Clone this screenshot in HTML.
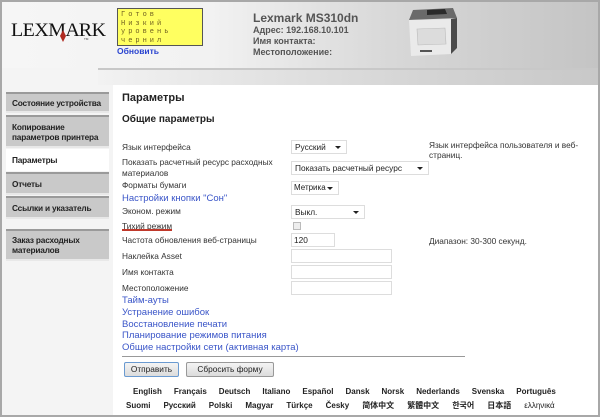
<!DOCTYPE html>
<html><head><meta charset="utf-8"><style>
*{margin:0;padding:0;box-sizing:border-box}
body{width:600px;height:417px;overflow:hidden;font-family:"Liberation Sans","Noto Sans CJK SC",sans-serif;background:#f4f4f4;position:relative;font-size:9px;color:#222}
.a{position:absolute;white-space:nowrap}
.frame{position:absolute;left:0;top:0;width:600px;height:417px;border:2px solid #a8a8a8;pointer-events:none}
.hdr{position:absolute;left:0;top:0;width:600px;height:68px;background:linear-gradient(90deg,#f6f6f6 0%,#f2f2f2 35%,#d8d8d8 65%,#c4c4c4 100%)}
.band{position:absolute;left:98px;top:68px;width:502px;height:17px;border-top:2px solid #c8c8c8;background:linear-gradient(90deg,#f2f2f2,#d6d6d6 60%,#c8c8c8)}
.main{position:absolute;left:113px;top:85px;width:487px;height:332px;background:#fff}
.nav{position:absolute;left:6px;width:103px;background:#c9c9c9;border-top:2px solid #9a9a9a;border-bottom:2px solid #e8e8e8;font-weight:bold;font-size:8.3px;letter-spacing:-0.2px;padding:0 0 0 6px;line-height:10px;display:flex;align-items:center;color:#222;white-space:nowrap}
.nav.on{background:#fff;border-color:#fff}
.lbl{position:absolute;left:122px;font-size:8.3px;color:#333;white-space:nowrap}
.lnk{position:absolute;left:122px;font-size:9.5px;color:#3a55c8;white-space:nowrap}
.sel{position:absolute;left:291px;height:14px;border:1px solid #ddd;background:#fff;font-size:8.3px;padding:1px 3px;color:#222;white-space:nowrap}
.sel:after{content:"";position:absolute;right:5px;top:5px;border:3px solid transparent;border-top:3px solid #222}
.inp{position:absolute;left:291px;height:14px;border:1px solid #ddd;background:#fff;font-size:8.3px;padding:1px 2px}
.btn{position:absolute;top:362px;height:15px;border:1px solid #999;border-radius:2px;background:linear-gradient(#f4f4f4,#dcdcdc);font-size:8.3px;text-align:center;line-height:13px}
.lang{position:absolute;font-weight:bold;font-size:8px;color:#222;white-space:nowrap}
.lang span{display:inline-block}
</style></head><body>
<div class="hdr"></div>
<div class="band"></div>
<div class="main"></div>
<div class="a" style="left:11px;top:20px;font-family:'Liberation Serif',serif;font-size:19px;letter-spacing:-0.5px;color:#111;transform:scaleX(1.05);transform-origin:left">LEXM<span style="letter-spacing:-1px">A</span>RK</div>
<div class="a" style="left:60px;top:30px;width:6px;height:12px;background:#b02a20;clip-path:polygon(50% 0,100% 50%,50% 100%,0 50%)"></div>
<div class="a" style="left:84px;top:37px;font-size:3px;color:#333">TM</div>
<div class="a" style="left:117px;top:8px;width:86px;height:38px;background:#ffff60;border:1px solid #555;font-family:'Liberation Mono',monospace;font-size:7px;line-height:8.6px;color:#706020;padding:2px 3px 0;letter-spacing:3px">Готов<br>Низкий<br>уровень<br>чернил</div>
<div class="a" style="left:117px;top:46px;font-size:8.5px;color:#2a44d0;font-weight:bold">Обновить</div>
<div class="a" style="left:253px;top:11px;font-size:12px;font-weight:bold;color:#555">Lexmark MS310dn</div>
<div class="a" style="left:253px;top:25px;font-size:9px;font-weight:bold;color:#555;line-height:11px">Адрес: 192.168.10.101<br>Имя контакта:<br>Местоположение:</div>
<svg class="a" style="left:405px;top:4px" width="60" height="55" viewBox="0 0 60 55">
<path d="M8 6 L48 4 L52 14 L4 16 Z" fill="#6a6a6a"/>
<path d="M22 6 L40 5 L42 10 L22 11Z" fill="#2a2a2a"/>
<path d="M4 16 L46 15 L46 50 L6 52 Z" fill="#eaeaea"/>
<path d="M46 15 L52 14 L52 44 L46 50Z" fill="#4a4a4a"/>
<path d="M12 25 L40 24 L41 40 L13 41Z" fill="#dcdcdc" stroke="#bbb" stroke-width=".6"/>
<rect x="15" y="46" width="12" height="2" fill="#555"/>
</svg>
<div class="nav" style="top:92px;height:21px">Состояние устройства</div>
<div class="nav" style="top:115px;height:33px">Копирование<br>параметров принтера</div>
<div class="nav on" style="top:149px;height:22px">Параметры</div>
<div class="nav" style="top:172px;height:23px">Отчеты</div>
<div class="nav" style="top:196px;height:23px">Ссылки и указатель</div>
<div class="nav" style="top:229px;height:32px">Заказ расходных<br>материалов</div>
<div class="a" style="left:122px;top:92px;font-size:11px;font-weight:bold;color:#222">Параметры</div>
<div class="a" style="left:122px;top:114px;font-size:10px;font-weight:bold;color:#222">Общие параметры</div>
<div class="lbl" style="top:142px">Язык интерфейса</div>
<div class="lbl" style="top:157px;line-height:11px">Показать расчетный ресурс расходных<br>материалов</div>
<div class="lbl" style="top:180px">Форматы бумаги</div>
<div class="lnk" style="top:193px">Настройки кнопки "Сон"</div>
<div class="lbl" style="top:206px">Эконом. режим</div>
<div class="lbl" style="top:221px">Тихий режим</div>
<div class="a" style="left:122px;top:229px;width:50px;height:2px;background:#c0392b"></div>
<div class="lbl" style="top:235px">Частота обновления веб-страницы</div>
<div class="lbl" style="top:251px">Наклейка Asset</div>
<div class="lbl" style="top:267px">Имя контакта</div>
<div class="lbl" style="top:283px">Местоположение</div>
<div class="lnk" style="top:295px">Тайм-ауты</div>
<div class="lnk" style="top:307px">Устранение ошибок</div>
<div class="lnk" style="top:319px">Восстановление печати</div>
<div class="lnk" style="top:330px">Планирование режимов питания</div>
<div class="lnk" style="top:342px">Общие настройки сети (активная карта)</div>
<div class="sel" style="top:140px;width:56px">Русский</div>
<div class="sel" style="top:161px;width:138px">Показать расчетный ресурс</div>
<div class="sel" style="top:181px;width:48px;font-size:8px;padding:1px 2px">Метрика</div>
<div class="sel" style="top:205px;width:74px">Выкл.</div>
<div class="a" style="left:293px;top:222px;width:8px;height:8px;border:1px solid #bbb;background:#eee"></div>
<div class="inp" style="top:233px;width:44px">120</div>
<div class="inp" style="top:249px;width:101px"></div>
<div class="inp" style="top:265px;width:101px"></div>
<div class="inp" style="top:281px;width:101px"></div>
<div class="a" style="left:429px;top:140px;font-size:8.3px;line-height:10px;color:#333">Язык интерфейса пользователя и веб-<br>страниц.</div>
<div class="a" style="left:429px;top:236px;font-size:8.3px;color:#333">Диапазон: 30-300 секунд.</div>
<div class="a" style="left:122px;top:356px;width:343px;height:1px;background:#999"></div>
<div class="btn" style="left:124px;width:55px;border-color:#6a9ad0">Отправить</div>
<div class="btn" style="left:186px;width:88px">Сбросить форму</div>
<div class="lang" style="left:133px;top:387px"><span style="margin-right:12px">English</span><span style="margin-right:12px">Français</span><span style="margin-right:12px">Deutsch</span><span style="margin-right:12px">Italiano</span><span style="margin-right:12px">Español</span><span style="margin-right:12px">Dansk</span><span style="margin-right:12px">Norsk</span><span style="margin-right:12px">Nederlands</span><span style="margin-right:12px">Svenska</span><span>Português</span></div>
<div class="lang" style="left:126px;top:400px"><span style="margin-right:13px">Suomi</span><span style="margin-right:13px">Русский</span><span style="margin-right:13px">Polski</span><span style="margin-right:13px">Magyar</span><span style="margin-right:13px">Türkçe</span><span style="margin-right:13px">Česky</span><span style="margin-right:13px">简体中文</span><span style="margin-right:13px">繁體中文</span><span style="margin-right:13px">한국어</span><span style="margin-right:13px">日本語</span><span style="font-weight:normal">ελληνικά</span></div>
<div class="frame"></div>
</body></html>
